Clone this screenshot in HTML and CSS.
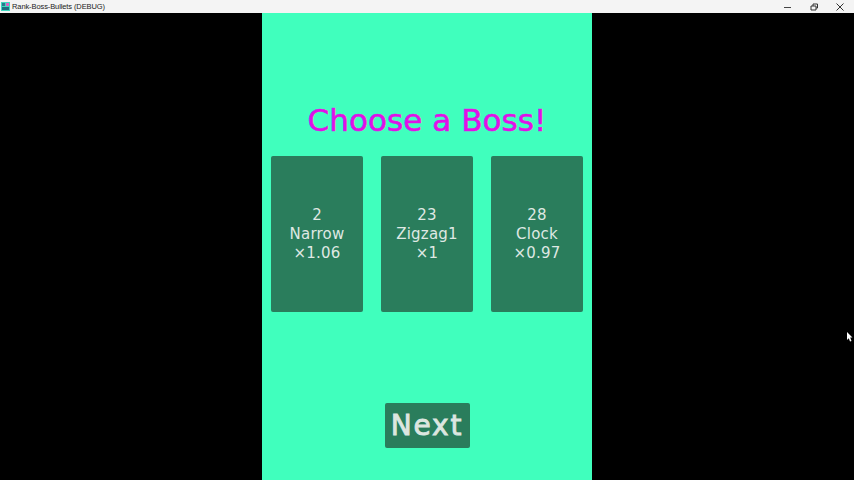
FILE: index.html
```html
<!DOCTYPE html>
<html lang="en">
<head>
<meta charset="utf-8">
<title>Rank-Boss-Bullets (DEBUG)</title>
<link rel="stylesheet" href="styles.css">
</head>
<body>
<header class="titlebar">
  <div class="app">
    <svg class="app-icon" viewBox="0 0 9 9" width="9" height="9"><rect width="9" height="9" fill="#3fd8c0"/><rect x="1" y="1" width="3" height="3" fill="#2a7a8c"/><rect x="5" y="1" width="3" height="3" fill="#e060c0"/><rect x="1" y="5" width="7" height="3" fill="#1f6f80"/></svg>
    <span class="app-name">Rank-Boss-Bullets (DEBUG)</span>
  </div>
  <div class="controls">
    <svg viewBox="0 0 10 10" width="10" height="10"><path d="M1 5.500H8" stroke="#444" fill="none"/></svg>
    <svg viewBox="0 0 10 10" width="10" height="10"><path d="M2 4h5v4H2zM4 4V2h4.500v4H7" stroke="#333" fill="none"/></svg>
    <svg viewBox="0 0 10 10" width="10" height="10"><path d="M1.500 1.500l7 7M8.500 1.500l-7 7" stroke="#333" fill="none"/></svg>
  </div>
</header>
<main class="stage">
  <section class="panel">
    <h1 class="heading">Choose a Boss!</h1>
    <div class="cards">
      <div class="card">2<br>Narrow<br>×1.06</div>
      <div class="card">23<br>Zigzag1<br>×1</div>
      <div class="card">28<br>Clock<br>×0.97</div>
    </div>
    <button class="next">Next</button>
  </section>
</main>
<svg class="cursor" viewBox="0 0 6 10" width="6" height="10"><path d="M0 0L5.500 5.500H3.200L4.500 9L3 9.500L1.800 6.200L0 8Z" fill="#fff"/></svg>
</body>
</html>
```
FILE: styles.css
```css
* { box-sizing: border-box; }
html, body { height: 100%; }
body {
  margin: 0;
  display: flex;
  flex-direction: column;
  background: #000;
  overflow: hidden;
  font-family: "DejaVu Sans", sans-serif;
}
.titlebar {
  height: 13px;
  flex: none;
  background: #f4f4f4;
  display: flex;
  justify-content: space-between;
  align-items: center;
}
.app { display: flex; align-items: center; gap: 2px; padding-left: 1px; }
.app-icon { display: block; }
.app-name { font: 7.500px/13px "Liberation Sans", sans-serif; letter-spacing: -0.1px; color: #222; }
.controls { display: flex; gap: 16px; padding-right: 9px; }
.controls svg { display: block; }
.stage { flex: 1; display: flex; justify-content: center; min-height: 0; }
.panel {
  width: 330px;
  background: #40ffbd;
  display: flex;
  flex-direction: column;
  align-items: center;
  padding: 93px 9px 32px;
}
.heading {
  margin: 0 0 22px;
  height: 28px;
  font: 400 31px/28px "DejaVu Sans", sans-serif;
  color: #e010e8;
  letter-spacing: 0.05px;
  -webkit-text-stroke: 0.6px #e010e8;
  white-space: nowrap;
}
.cards { display: flex; gap: 18px; width: 100%; }
.card {
  flex: 1;
  height: 156px;
  background: #2a7d5c;
  border-radius: 2px;
  color: #dfe8e3;
  text-align: center;
  font: 15px/19px "DejaVu Sans", sans-serif;
  letter-spacing: 0.2px;
  padding-top: 50px;
}
.next {
  margin-top: auto;
  width: 85px;
  height: 45px;
  padding: 0;
  border: 0;
  border-radius: 2px;
  background: #2a7d5c;
  color: #dce6e0;
  font: 400 28px/45px "DejaVu Sans", sans-serif;
  letter-spacing: 1.800px;
  -webkit-text-stroke: 0.9px #dce6e0;
}
.cursor { position: absolute; left: 847px; top: 332px; }
```
